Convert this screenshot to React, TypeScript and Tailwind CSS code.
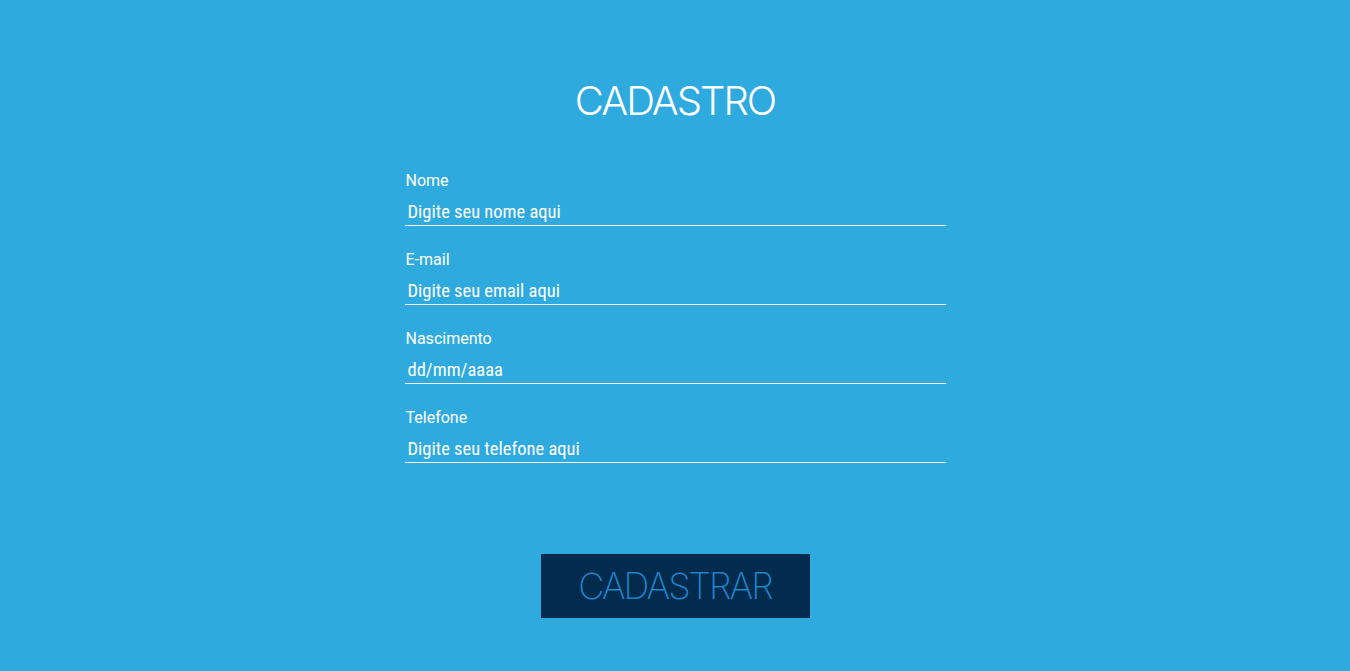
import React from "react";

const fields = [
  { label: "Nome", placeholder: "Digite seu nome aqui" },
  { label: "E-mail", placeholder: "Digite seu email aqui" },
  { label: "Nascimento", placeholder: "dd/mm/aaaa" },
  { label: "Telefone", placeholder: "Digite seu telefone aqui" },
];

export default function App() {
  return (
    <div className="min-h-[671px] w-full bg-[#2eaadf] flex flex-col items-center">
      <h1 className="mt-[76px] text-[40px] leading-[50px] text-white font-light tracking-[-2px] font-['Inter','Liberation_Sans',sans-serif]">
        CADASTRO
      </h1>
      <form className="mt-[45px] w-[541px] flex flex-col gap-[24px]">
        {fields.map((f) => (
          <div key={f.label} className="flex flex-col">
            <label className="text-[16px] leading-[20px] text-white pl-[1px] font-['Roboto','Liberation_Sans',sans-serif]">
              {f.label}
            </label>
            <input
              type="text"
              placeholder={f.placeholder}
              className="mt-[1px] h-[34px] bg-transparent border-0 border-b border-white text-[18.5px] text-white placeholder:text-white px-[3px] pt-[6px] outline-none font-['Liberation_Sans_Narrow','Roboto_Condensed','Roboto',sans-serif]"
            />
          </div>
        ))}
      </form>
      <button className="mt-[91px] w-[269px] h-[64px] bg-[#022b4d] text-[#1e84cc] text-[36px] leading-[64px] font-extralight tracking-[-2px] font-['Inter','Liberation_Sans',sans-serif]">
        CADASTRAR
      </button>
    </div>
  );
}
